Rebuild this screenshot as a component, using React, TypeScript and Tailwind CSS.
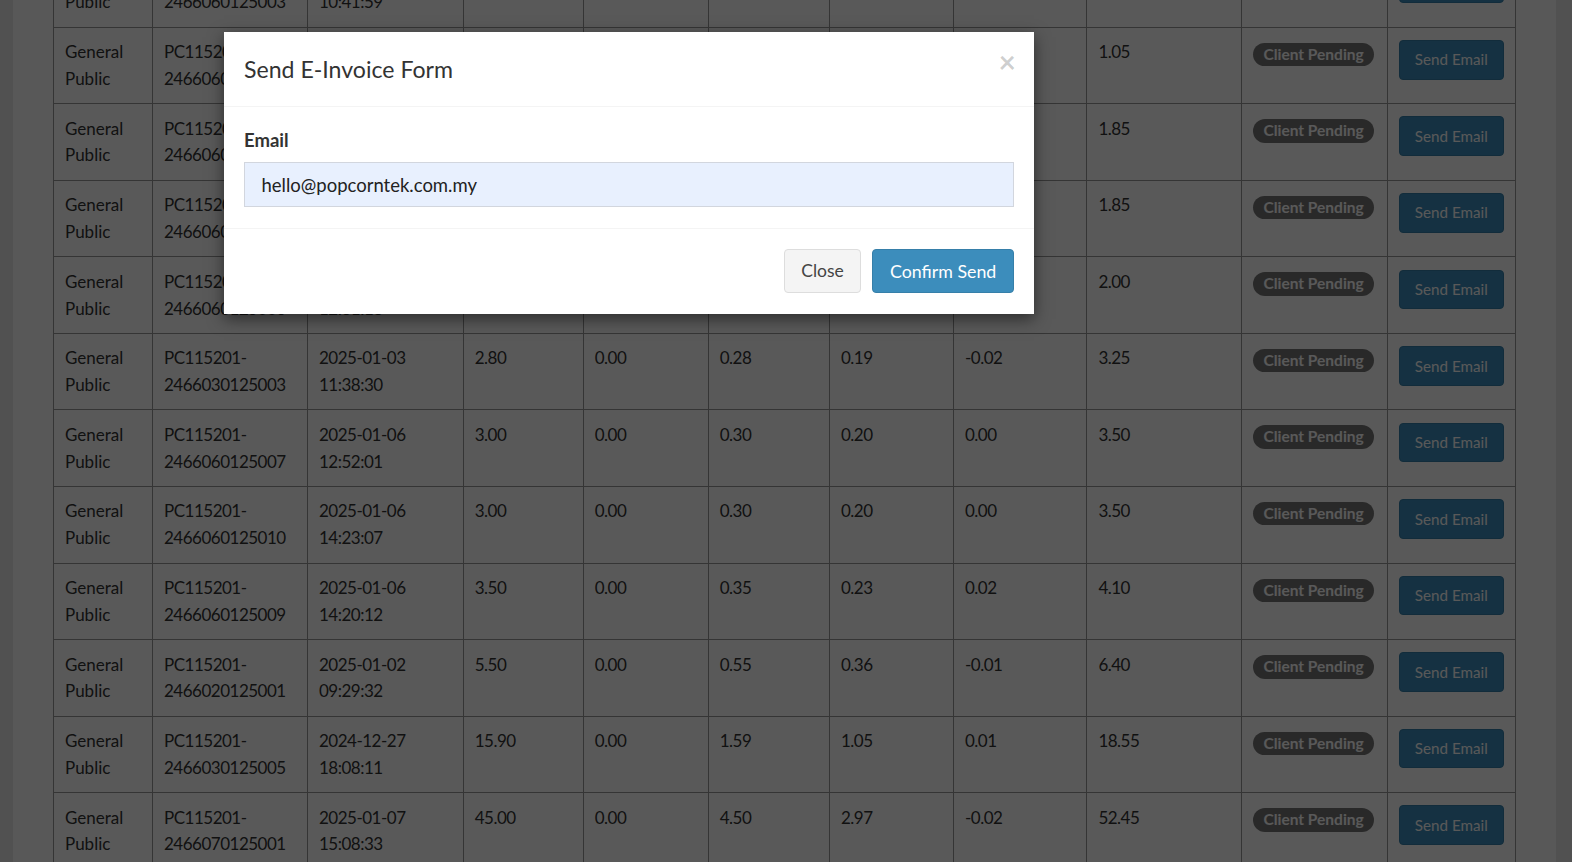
type Row = {
  id: string
  date: string
  time: string
  amount: string
  discount: string
  service: string
  tax: string
  rounding: string
  total: string
}

const rows: Row[] = [
  { id: '2466060125003', date: '2025-01-06', time: '10:41:59', amount: '1.50', discount: '0.00', service: '0.15', tax: '0.10', rounding: '0.00', total: '1.75' },
  { id: '2466060125001', date: '2025-01-06', time: '09:12:44', amount: '0.90', discount: '0.00', service: '0.09', tax: '0.06', rounding: '0.00', total: '1.05' },
  { id: '2466060125002', date: '2025-01-06', time: '09:58:21', amount: '1.60', discount: '0.00', service: '0.16', tax: '0.11', rounding: '-0.02', total: '1.85' },
  { id: '2466060125004', date: '2025-01-06', time: '11:05:37', amount: '1.60', discount: '0.00', service: '0.16', tax: '0.11', rounding: '-0.02', total: '1.85' },
  { id: '2466060125006', date: '2025-01-06', time: '12:31:18', amount: '1.70', discount: '0.00', service: '0.17', tax: '0.11', rounding: '0.02', total: '2.00' },
  { id: '2466030125003', date: '2025-01-03', time: '11:38:30', amount: '2.80', discount: '0.00', service: '0.28', tax: '0.19', rounding: '-0.02', total: '3.25' },
  { id: '2466060125007', date: '2025-01-06', time: '12:52:01', amount: '3.00', discount: '0.00', service: '0.30', tax: '0.20', rounding: '0.00', total: '3.50' },
  { id: '2466060125010', date: '2025-01-06', time: '14:23:07', amount: '3.00', discount: '0.00', service: '0.30', tax: '0.20', rounding: '0.00', total: '3.50' },
  { id: '2466060125009', date: '2025-01-06', time: '14:20:12', amount: '3.50', discount: '0.00', service: '0.35', tax: '0.23', rounding: '0.02', total: '4.10' },
  { id: '2466020125001', date: '2025-01-02', time: '09:29:32', amount: '5.50', discount: '0.00', service: '0.55', tax: '0.36', rounding: '-0.01', total: '6.40' },
  { id: '2466030125005', date: '2024-12-27', time: '18:08:11', amount: '15.90', discount: '0.00', service: '1.59', tax: '1.05', rounding: '0.01', total: '18.55' },
  { id: '2466070125001', date: '2025-01-07', time: '15:08:33', amount: '45.00', discount: '0.00', service: '4.50', tax: '2.97', rounding: '-0.02', total: '52.45' }
]

const cell =
  'border border-[#999] bg-white align-top h-[76.56px] px-[11px] pt-[11.5px] pb-0 text-[17px] leading-[26.67px] text-[#333]'
const num = 'tracking-[-0.5px]'

function InvoiceRow({ row }: { row: Row }): React.JSX.Element {
  return (
    <tr>
      <td className={cell}>
        General
        <br />
        Public
      </td>
      <td className={`${cell} ${num}`}>
        PC115201-
        <br />
        {row.id}
      </td>
      <td className={`${cell} ${num}`}>
        {row.date}
        <br />
        {row.time}
      </td>
      <td className={`${cell} ${num}`}>{row.amount}</td>
      <td className={`${cell} ${num}`}>{row.discount}</td>
      <td className={`${cell} ${num}`}>{row.service}</td>
      <td className={`${cell} ${num}`}>{row.tax}</td>
      <td className={`${cell} ${num}`}>{row.rounding}</td>
      <td className={`${cell} ${num}`}>{row.total}</td>
      <td className={`${cell} pt-[10.67px]`}>
        <span className="inline-block align-top mt-[3.5px] rounded-full bg-[#777] px-[10px] text-[15.5px] leading-[23.5px] font-bold text-white whitespace-nowrap">
          Client Pending
        </span>
      </td>
      <td className={`${cell} pt-[10.67px]`}>
        <button
          type="button"
          className="block mt-[0.7px] w-[104.7px] h-[39.7px] rounded-[4px] border border-[#367fa9] bg-[#3c8dbc] text-[15.2px] text-white"
        >
          Send Email
        </button>
      </td>
    </tr>
  )
}

function InvoiceTable(): React.JSX.Element {
  return (
    <table className="table-fixed border-collapse w-[1462px] mt-[-49.86px]">
      <colgroup>
        <col className="w-[99px]" />
        <col className="w-[155px]" />
        <col className="w-[155.7px]" />
        <col className="w-[120px]" />
        <col className="w-[125px]" />
        <col className="w-[121.3px]" />
        <col className="w-[124px]" />
        <col className="w-[133.4px]" />
        <col className="w-[155px]" />
        <col className="w-[145.6px]" />
        <col className="w-[128px]" />
      </colgroup>
      <tbody>
        {rows.map((row) => (
          <InvoiceRow key={row.id + row.time} row={row} />
        ))}
      </tbody>
    </table>
  )
}

function SendInvoiceModal(): React.JSX.Element {
  return (
    <div className="absolute inset-0 bg-black/65">
      <div className="ml-[224px] mt-[32px] w-[810px] bg-white shadow-[0_5px_15px_rgba(0,0,0,0.5)]">
        <div className="flex items-start justify-between border-b border-[#f4f4f4] px-[20px] pt-[20px] pb-[20px]">
          <h4 className="text-[23.1px] leading-[34.3px] text-[#333]">Send E-Invoice Form</h4>
          <button
            type="button"
            className="mt-[-6px] mr-[-2px] text-[30px] leading-none font-bold text-black/20"
          >
            ×
          </button>
        </div>
        <div className="px-[20px] pt-[20px] pb-[20.5px]">
          <label className="block mb-[8px] text-[18.5px] leading-[26.67px] font-bold text-[#333]">
            Email
          </label>
          <input
            type="text"
            readOnly
            defaultValue="hello@popcorntek.com.my"
            className="block w-full h-[45.3px] border border-[#d2d6de] bg-[#e8f0fe] px-[16.5px] text-[18.5px] text-[#222] outline-none"
          />
        </div>
        <div className="flex justify-end gap-[11.7px] border-t border-[#f4f4f4] px-[20px] pt-[20px] pb-[21px]">
          <button
            type="button"
            className="w-[76.3px] h-[44.3px] rounded-[4px] border border-[#ddd] bg-[#f4f4f4] text-[17.5px] text-[#444]"
          >
            Close
          </button>
          <button
            type="button"
            className="w-[141.7px] h-[44.3px] rounded-[4px] border border-[#367fa9] bg-[#3c8dbc] text-[17.8px] text-white"
          >
            Confirm Send
          </button>
        </div>
      </div>
    </div>
  )
}

export default function App(): React.JSX.Element {
  return (
    <div className="relative h-[862px] overflow-hidden bg-[#e8e8e8] font-[family-name:Lato,sans-serif]">
      <div className="flow-root ml-[13px] mr-[16px] h-full bg-[#fcfcfc] px-[40px]">
        <InvoiceTable />
      </div>
      <SendInvoiceModal />
    </div>
  )
}
